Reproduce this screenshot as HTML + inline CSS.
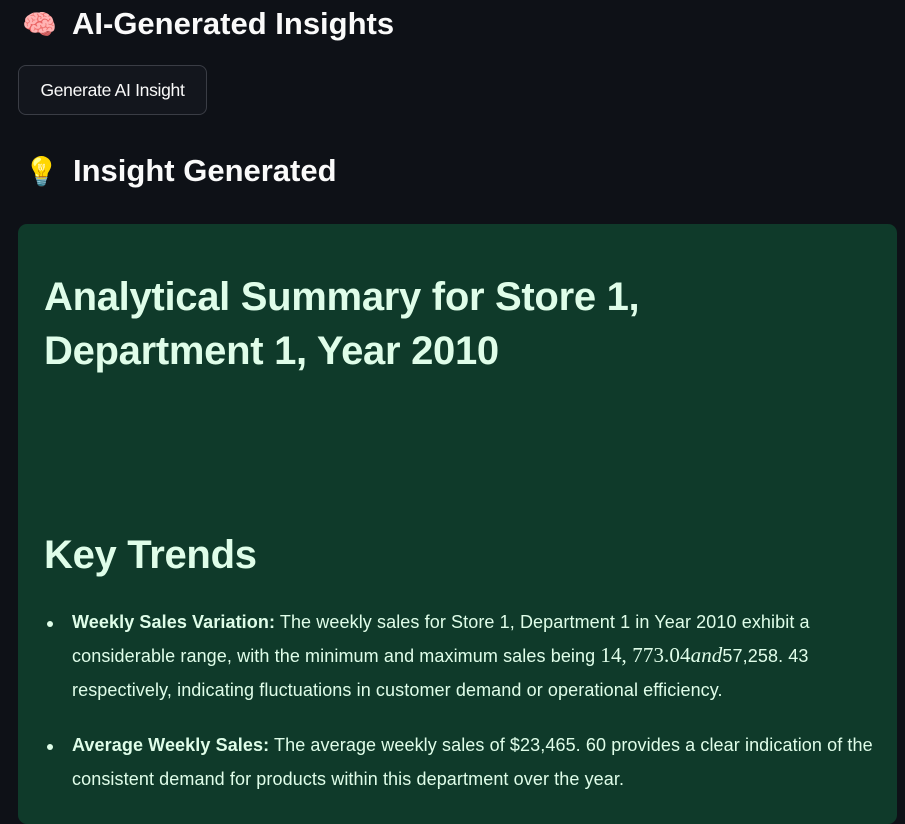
<!DOCTYPE html>
<html><head><meta charset="utf-8"><style>
body{margin:0;width:905px;height:803px;overflow:hidden;background:#0e1117;font-family:"Liberation Sans",sans-serif;color:#fafafa;position:relative}
.a{position:absolute;white-space:nowrap}
h2{margin:0;font-size:31px;font-weight:700;letter-spacing:0}
.btn{left:18px;top:65px;width:189px;height:50px;border:1px solid #3a3d45;border-radius:8px;background:#13161d;box-sizing:border-box;font-size:17.5px;line-height:48px;text-align:center;letter-spacing:-0.3px}
.box{left:18px;top:224px;width:879px;height:600px;background:#0f3a2a;border-radius:9px}
.g{color:#dffde9}
.h1{font-size:40px;font-weight:700;letter-spacing:-0.3px}
.t{font-size:18px;letter-spacing:0.1px;line-height:22px}
.dot{width:6px;height:6px;border-radius:50%;background:#dffde9}
.m{font-family:"Liberation Serif",serif;font-size:21px;line-height:18px}
</style></head><body>
<div class="a" style="left:22px;top:8px;font-size:28px">🧠</div>
<h2 class="a" style="left:72px;top:6px">AI-Generated Insights</h2>
<div class="a btn">Generate AI Insight</div>
<div class="a" style="left:24px;top:155px;font-size:28px">💡</div>
<h2 class="a" style="left:73px;top:153px">Insight Generated</h2>
<div class="a box"></div>
<div class="a g h1" style="left:44px;top:275px">Analytical Summary for Store 1,</div>
<div class="a g h1" style="left:44px;top:329px">Department 1, Year 2010</div>
<div class="a g h1" style="left:44px;top:533px">Key Trends</div>
<div class="a dot" style="left:47px;top:621px"></div>
<div class="a g t" style="left:72px;top:611px"><b>Weekly Sales Variation:</b> The weekly sales for Store 1, Department 1 in Year 2010 exhibit a</div>
<div class="a g t" style="left:72px;top:645px">considerable range, with the minimum and maximum sales being <span class="m">14, 773.04<i>and</i></span>57,258. 43</div>
<div class="a g t" style="left:72px;top:679px">respectively, indicating fluctuations in customer demand or operational efficiency.</div>
<div class="a dot" style="left:47px;top:744px"></div>
<div class="a g t" style="left:72px;top:734px"><b>Average Weekly Sales:</b> The average weekly sales of $23,465. 60 provides a clear indication of the</div>
<div class="a g t" style="left:72px;top:768px">consistent demand for products within this department over the year.</div>
</body></html>
